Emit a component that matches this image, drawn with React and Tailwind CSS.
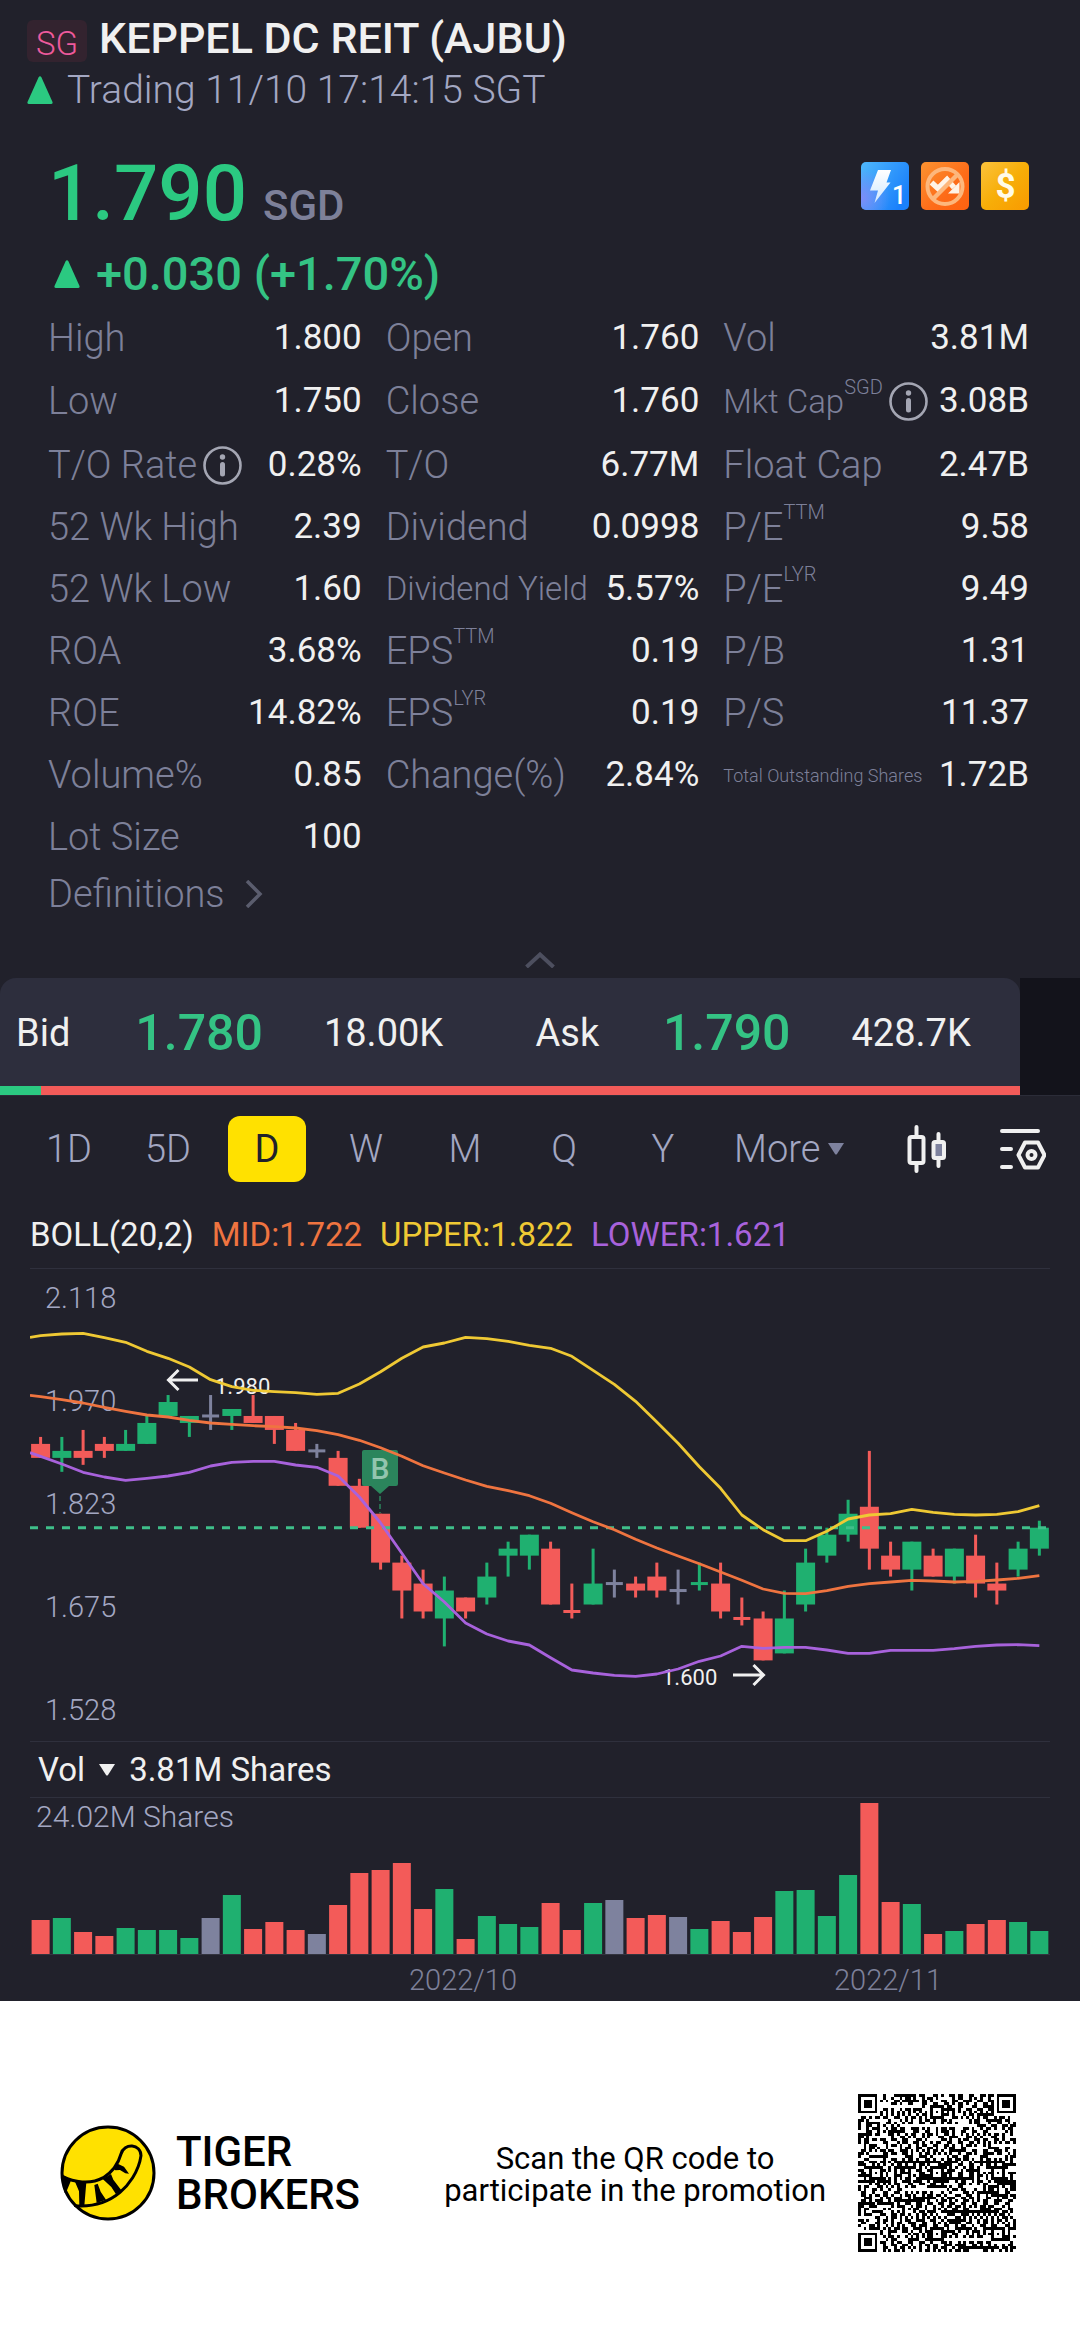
import React from "react";

const STATS = [
  ["High", "1.800"], ["Open", "1.760"], ["Vol", "3.81M"],
  ["Low", "1.750"], ["Close", "1.760"], ["Mkt Cap", "3.08B", { sup: "SGD", info: true, size: "md" }],
  ["T/O Rate", "0.28%", { info: true }], ["T/O", "6.77M"], ["Float Cap", "2.47B"],
  ["52 Wk High", "2.39"], ["Dividend", "0.0998"], ["P/E", "9.58", { sup: "TTM" }],
  ["52 Wk Low", "1.60"], ["Dividend Yield", "5.57%", { size: "md" }], ["P/E", "9.49", { sup: "LYR" }],
  ["ROA", "3.68%"], ["EPS", "0.19", { sup: "TTM" }], ["P/B", "1.31"],
  ["ROE", "14.82%"], ["EPS", "0.19", { sup: "LYR" }], ["P/S", "11.37"],
  ["Volume%", "0.85"], ["Change(%)", "2.84%"], ["Total Outstanding Shares", "1.72B", { size: "sm" }],
  ["Lot Size", "100"],
];

const LABEL_SIZE = { md: "text-[33px]", sm: "text-[18px]", lg: "text-[38px]" };

const COLORS = { r: "#f35b59", g: "#1fb070", n: "#7e829e" };

// kind, body top, body bottom, high, low (cents), volume bar height
const CANDLES = [
  ["r", 191, 189, 192, 189, 34], ["g", 190, 189, 192, 187, 36], ["r", 190, 189, 193, 188, 22], ["r", 191, 190, 192, 189, 18],
  ["g", 191, 190, 193, 190, 26], ["g", 194, 191, 195, 191, 24], ["g", 197, 195, 198, 195, 24], ["g", 195, 194, 195, 192, 16],
  ["n", 195, 195, 198, 193, 36], ["g", 196, 195, 196, 193, 59], ["r", 195, 194, 198, 194, 25], ["r", 195, 193, 195, 191, 32],
  ["r", 193, 190, 194, 190, 24], ["n", 190, 190, 191, 189, 20], ["r", 189, 185, 190, 185, 49], ["r", 185, 179, 186, 179, 81],
  ["r", 181, 174, 181, 173, 84], ["r", 174, 170, 175, 166, 91], ["r", 171, 167, 173, 166, 45], ["g", 170, 166, 172, 162, 65],
  ["r", 169, 167, 169, 166, 15], ["g", 172, 169, 174, 168, 38], ["g", 176, 175, 177, 172, 30], ["g", 178, 175, 178, 173, 27],
  ["r", 176, 168, 177, 168, 51], ["r", 167, 167, 171, 166, 24], ["g", 171, 168, 176, 168, 51], ["n", 171, 171, 173, 169, 54],
  ["r", 171, 170, 172, 169, 36], ["r", 172, 170, 174, 169, 39], ["n", 170, 170, 173, 168, 37], ["g", 171, 171, 174, 170, 25],
  ["r", 171, 167, 174, 166, 33], ["r", 166, 166, 169, 165, 22], ["r", 166, 160, 167, 160, 37], ["g", 166, 161, 170, 161, 63],
  ["g", 174, 168, 176, 167, 64], ["g", 178, 175, 179, 174, 38], ["g", 181, 178, 183, 177, 79], ["r", 182, 176, 190, 173, 151],
  ["r", 175, 173, 177, 172, 52], ["g", 177, 173, 177, 170, 50], ["r", 175, 172, 176, 172, 20], ["g", 176, 172, 176, 171, 23],
  ["r", 175, 171, 178, 169, 30], ["r", 171, 170, 174, 168, 34], ["g", 176, 173, 177, 172, 32], ["g", 179, 176, 180, 175, 23],
];

// Bollinger bands: the first value sits on the left edge, the rest on the candles
const UPPER = [69.3, 67.7, 66, 65.3, 69.7, 74.3, 83.3, 90.3, 99, 111.7, 118.7, 122.3, 123.7, 124.7, 126.3, 125.3, 116, 103.7, 90.3, 79, 75, 69.3, 70.7, 73.3, 77.3, 80.3, 88.3, 102.3, 116.3, 133.3, 154, 175.3, 198.7, 220.3, 247, 261.7, 272.7, 272.7, 263.3, 251, 247, 245.7, 241.3, 244.3, 246.3, 247, 246.3, 243.7, 237.7];
const MID = [127.3, 128.7, 131.7, 135, 139.3, 143.3, 147, 149, 152.3, 155, 156.3, 157.7, 158.7, 160, 162.7, 166.7, 172.3, 179.7, 188.3, 197.7, 205, 212, 218.3, 222.7, 227.7, 235.3, 244.7, 253.7, 261.7, 271.3, 280, 288, 295.7, 304, 312.3, 321, 325.3, 325.7, 322.7, 318.3, 315.7, 314, 312.3, 313, 314, 313.3, 312, 310.3, 307.7];
const LOWER = [184.7, 188.3, 196, 204.3, 209, 212.3, 210.3, 208, 204.3, 198, 194.3, 193.3, 193.3, 197, 199.3, 208, 229, 255, 285.3, 315.7, 334, 355, 366, 373, 377, 389.7, 402, 405, 407.3, 408.3, 406, 401, 393.3, 388, 378.3, 380.3, 379.3, 379.3, 382, 385.3, 385.3, 382.3, 382.3, 382.3, 380.7, 378.3, 377, 376.7, 377.7];

const cx = (i) => 10.6 + 21.25 * i;
const cy = (cents) => 259.7 - (cents - 179) * 6.983;
const band = (ys) => ys.map((y, i) => `${i === 0 ? 0 : cx(i - 1)},${y}`).join(" ");

function Triangle() {
  return (
    <svg viewBox="0 0 26 28" className="h-7 w-[26px] shrink-0" fill="#2bc981" aria-hidden="true">
      <path d="M11.5 1.5Q13 -1 14.500 1.500L25.500 26Q26 28 24 28H2Q0 28 .5 26Z" />
    </svg>
  );
}

function Info() {
  return (
    <svg viewBox="0 0 39 39" className="h-[39px] w-[39px] shrink-0" fill="none" stroke="#a4a6b3" aria-hidden="true">
      <circle cx="19.500" cy="19.500" r="18" strokeWidth="2.600" />
      <path d="M19.500 18.500V28" strokeWidth="5" strokeLinecap="round" />
      <circle cx="19.500" cy="11" r="2.700" fill="#a4a6b3" stroke="none" />
    </svg>
  );
}

function Stat({ label, value, opts = {} }) {
  return (
    <div className="flex items-center justify-between">
      <dt className="flex items-center whitespace-nowrap font-light text-[#7d8099]">
        <span className={LABEL_SIZE[opts.size || "lg"]}>{label}</span>
        {opts.sup && <sup className="-top-[15px] text-[20px] leading-none">{opts.sup}</sup>}
        {opts.info && (
          <span className="ml-1.5">
            <Info />
          </span>
        )}
      </dt>
      <dd className="text-[35px] text-[#f0f0f0]">{value}</dd>
    </div>
  );
}

function Badges() {
  return (
    <div className="mt-1.5 flex gap-3">
      <svg viewBox="0 0 48 48" className="h-12 w-12" aria-label="Level 1 quotes">
        <defs>
          <linearGradient id="blue" x1="0" y1="0" x2="1" y2=".6">
            <stop offset="0" stopColor="#4fb8fb" />
            <stop offset="1" stopColor="#1a80fb" />
          </linearGradient>
          <radialGradient id="violet" cx="0" cy=".75" r=".6">
            <stop offset="0" stopColor="#7d8cf8" />
            <stop offset="1" stopColor="#7d8cf8" stopOpacity="0" />
          </radialGradient>
          <linearGradient id="bolt" x1="0" y1="0" x2="0" y2="1">
            <stop offset="0" stopColor="#fff" />
            <stop offset="1" stopColor="#cfe8ff" />
          </linearGradient>
        </defs>
        <rect width="48" height="48" rx="5" fill="url(#blue)" />
        <rect width="48" height="48" rx="5" fill="url(#violet)" />
        <path d="M17 8H30L25.500 20.500H29.500L13.500 41L17 28.500H9Z" fill="url(#bolt)" />
        <text x="31" y="42" fontSize="25" fontWeight="500" fill="#fff">1</text>
      </svg>
      <svg viewBox="0 0 48 48" className="h-12 w-12" aria-label="Short selling unavailable">
        <defs>
          <linearGradient id="orange" x1="0" y1="0" x2="1" y2="1">
            <stop offset="0" stopColor="#fb9331" />
            <stop offset=".6" stopColor="#fd6b18" />
            <stop offset="1" stopColor="#fe6210" />
          </linearGradient>
        </defs>
        <rect width="48" height="48" rx="5" fill="url(#orange)" />
        <path d="M10.500 20.500L17 26.500L26 17.500L33 25.500" fill="none" stroke="#fff3e6" strokeWidth="5.500" />
        <path d="M38.500 20V31.500H27Z" fill="#fff3e6" />
        <circle cx="24" cy="24.500" r="17.500" fill="none" stroke="#fdb77c" strokeWidth="4" />
        <path d="M12 37L36.500 12.500" stroke="#fdb77c" strokeWidth="4.500" />
      </svg>
      <svg viewBox="0 0 48 48" className="h-12 w-12" aria-label="Dividend">
        <defs>
          <linearGradient id="gold" x1="0" y1="0" x2="1" y2="1">
            <stop offset="0" stopColor="#fbc23c" />
            <stop offset=".5" stopColor="#f7ae08" />
            <stop offset="1" stopColor="#f99a00" />
          </linearGradient>
        </defs>
        <rect width="48" height="48" rx="5" fill="url(#gold)" />
        <text x="24.500" y="36" textAnchor="middle" fontSize="35" fontWeight="700" fill="#fffbe8">$</text>
      </svg>
    </div>
  );
}

function PriceChart() {
  return (
    <svg viewBox="0 1 1020 472" className="block w-full" role="img" aria-label="Daily candles with Bollinger bands">
      {CANDLES.map(([k, top, bottom, high, low], i) => (
        <g key={i} fill={COLORS[k]}>
          <rect x={cx(i) - 1.5} y={cy(high)} width="3" height={cy(low) - cy(high)} />
          {top === bottom ? (
            <rect x={cx(i) - 8.5} y={cy(top) - 1.5} width="17" height="3" />
          ) : (
            <rect x={cx(i) - 9.5} y={cy(top)} width="19" height={cy(bottom) - cy(top)} />
          )}
        </g>
      ))}
      <path d="M334 182H366Q368 182 368 184V216Q368 218 366 218H359L350 226L341 218H334Q332 218 332 216V184Q332 182 334 182Z" fill="#2b855c" />
      <path d="M350 228V245" stroke="#2b855c" strokeWidth="1.500" strokeDasharray="5 3" />
      <text x="350" y="211" textAnchor="middle" fontSize="30" fontWeight="500" fill="#93c5ae">B</text>
      <path d="M0 259.700H1018" stroke="#3fbf8a" strokeWidth="3" strokeDasharray="8 8" />
      <g fontSize="29" fontWeight="300" fill="#a3a7c2">
        {["2.118", "1.970", "1.823", "1.675", "1.528"].map((t, i) => (
          <text key={t} x="15" y={40 + 103 * i}>{t}</text>
        ))}
      </g>
      <g fontSize="22" fill="#f0f0f0">
        <text x="185" y="126">1.980</text>
        <text x="632" y="417">1.600</text>
      </g>
      <g fill="none" stroke="#f0f0f0" strokeWidth="3">
        <path d="M168 112H139M148.500 102L138.500 112L148.500 122" />
        <path d="M703 407H733M723.500 397L733.500 407L723.500 417" />
      </g>
      <g fill="none" strokeWidth="2.800" strokeLinejoin="round">
        <polyline points={band(UPPER)} stroke="#efc934" />
        <polyline points={band(MID)} stroke="#ef7440" />
        <polyline points={band(LOWER)} stroke="#a862dc" />
      </g>
    </svg>
  );
}

function VolumeChart() {
  return (
    <svg viewBox="0 0 1020 203" className="block w-full" role="img" aria-label="Daily volume">
      {CANDLES.map(([k, , , , , h], i) => (
        <rect key={i} x={cx(i) - 9} y={156 - h} width="18" height={h} fill={COLORS[k]} />
      ))}
      <path d="M0 156.500H1020" stroke="#33343f" />
      <text x="6" y="29" fontSize="30" fontWeight="300" fill="#a3a7c2">24.02M Shares</text>
      <g fontSize="29" fontWeight="300" fill="#7d8099" textAnchor="middle">
        <text x="433" y="192">2022/10</text>
        <text x="858" y="192">2022/11</text>
      </g>
    </svg>
  );
}

function TigerLogo() {
  return (
    <svg viewBox="60 76 288 288" className="h-24 w-24 shrink-0" aria-hidden="true">
      <circle cx="204" cy="220" r="138" fill="#ffe100" stroke="#000" strokeWidth="9" />
      <path d="M69 231C100 247 150 256 190 234C222 214 236 188 243 163C252 129 303 132 303 168C296 218 264 258 240 278C204 308 160 322 106 318" fill="none" stroke="#000" strokeWidth="9" strokeLinecap="round" />
      <path d="M66 226L94 240L80 274L74 280Q66 254 66 226ZM105 246L139 248L133 318L118 318L117 275ZM163 256L173 252L182 276L198 300L170 310ZM188 238L213 223L220 240L244 272L228 284L214 262ZM220 204L233 192L252 201L267 222L256 221L240 211L226 212Z" fill="#000" />
    </svg>
  );
}

const QR_SIZE = 57;

function qrPath() {
  const inFinder = (r, c) => [[0, 0], [0, QR_SIZE - 7], [QR_SIZE - 7, 0]].find(([y, x]) => r >= y - 1 && r <= y + 7 && c >= x - 1 && c <= x + 7);
  const aligns = [[6, 28], [28, 6], [28, 28], [28, 50], [50, 28], [50, 50]];
  let seed = 20221110;
  let d = "";
  for (let r = 0; r < QR_SIZE; r++) {
    for (let c = 0; c < QR_SIZE; c++) {
      seed = (seed * 1103515245 + 12345) % 2147483648;
      let on = (seed >> 12) % 2 === 1;
      const f = inFinder(r, c);
      const a = aligns.find(([y, x]) => Math.abs(r - y) < 3 && Math.abs(c - x) < 3);
      if (f) {
        const ring = Math.max(Math.abs(r - f[0] - 3), Math.abs(c - f[1] - 3));
        on = ring === 3 || ring < 2;
      } else if (a) {
        on = Math.max(Math.abs(r - a[0]), Math.abs(c - a[1])) !== 1;
      } else if (r === 6 || c === 6) {
        on = (r + c) % 2 === 0;
      }
      if (on) d += `M${c} ${r}h1v1h-1z`;
    }
  }
  return d;
}

const QR = qrPath();

export default function App() {
  const periods = ["1D", "5D", "D", "W", "M", "Q", "Y"];
  return (
    <div className="min-h-screen bg-white font-[Roboto,sans-serif]">
      <main className="bg-[#21212b]">
        <header className="px-[27px] pt-5">
          <div className="flex items-start gap-3">
            <span className="flex h-[42px] w-[60px] items-center justify-center rounded-md bg-[#33232f] pt-1 text-[33px] font-light leading-none text-[#ee5a9c]">SG</span>
            <h1 className="text-[43px] font-medium leading-9 text-[#f0f0f0]">KEPPEL DC REIT (AJBU)</h1>
          </div>
          <div className="mt-2 flex h-10 items-center gap-3.5">
            <Triangle />
            <p className="text-[39px] font-light leading-10 text-[#a3a7c2]">Trading 11/10 17:14:15 SGT</p>
          </div>
        </header>

        <section className="pl-12 pr-[51px]">
          <div className="mt-[46px] flex items-start justify-between">
            <p className="flex h-[76px] items-baseline gap-4">
              <span className="text-[78px] font-medium leading-[76px] text-[#2bc981]">1.790</span>
              <span className="text-[42px] font-medium leading-none text-[#7d8099]">SGD</span>
            </p>
            <Badges />
          </div>
          <div className="mt-[18px] flex h-12 items-center gap-4 pl-1.5">
            <Triangle />
            <p className="text-[47px] font-medium leading-[48px] text-[#34c384]">+0.030 (+1.70%)</p>
          </div>
          <dl className="mt-[9px] grid auto-rows-[62px] grid-cols-[314fr_314fr_306fr] grid-rows-[62px_65px] gap-x-6">
            {STATS.map(([label, value, opts], i) => (
              <Stat key={i} label={label} value={value} opts={opts} />
            ))}
          </dl>
          <a href="#definitions" className="flex h-[52px] items-center gap-5 text-[38px] font-light text-[#7d8099]">
            Definitions
            <svg viewBox="0 0 18 28" className="h-7 w-[18px]" fill="none" stroke="#5b5d6e" strokeWidth="3.500" aria-hidden="true">
              <path d="M2 1L15 14L2 27" />
            </svg>
          </a>
        </section>

        <button type="button" aria-label="Collapse" className="flex w-full justify-center pb-2.5 pt-8">
          <svg viewBox="0 0 30 16" className="h-4 w-[30px]" fill="none" stroke="#4d4f5f" strokeWidth="4" aria-hidden="true">
            <path d="M1.500 15L15 2.500L28.500 15" />
          </svg>
        </button>

        <section className="flex border-b border-[#2b2c38]">
          <div className="flex-1 overflow-hidden rounded-t-2xl bg-[#2d2e3d]">
            <div className="grid h-[108px] grid-cols-[119fr_188fr_211fr_127fr_188fr_168fr] items-center pl-4 pt-0.5 text-[38px] text-[#f0f0f0]">
              <span>Bid</span>
              <span className="text-[50px] font-medium text-[#34c384]">1.780</span>
              <span>18.00K</span>
              <span>Ask</span>
              <span className="text-[50px] font-medium text-[#34c384]">1.790</span>
              <span>428.7K</span>
            </div>
            <div className="flex h-[9px] bg-[#f35b59]">
              <div className="w-[4%] bg-[#2bc981]" />
            </div>
          </div>
          <div className="w-[60px] bg-[#13131b]" />
        </section>

        <nav className="flex items-center pl-[30px] pr-[34px] pt-5 text-[38px] font-light text-[#a3a7c2]">
          <div className="flex gap-[21px]">
            {periods.map((p) => (
              <button
                key={p}
                type="button"
                aria-pressed={p === "D"}
                className={p === "D" ? "h-[66px] w-[78px] rounded-xl bg-[#ffe100] font-normal text-[#21212b]" : "h-[66px] w-[78px]"}
              >
                {p}
              </button>
            ))}
          </div>
          <button type="button" className="ml-8 flex items-center gap-2">
            More
            <svg viewBox="0 0 16 12" className="h-3 w-4" fill="#7e829e" aria-hidden="true"><path d="M0 0H16L9 11Q8 12 7 11Z" /></svg>
          </button>
          <div className="ml-auto flex items-center gap-[53px]">
            <button type="button" aria-label="Chart type">
              <svg viewBox="0 0 40 48" className="h-12 w-10" fill="none" stroke="#f0f0f0" strokeWidth="4" strokeLinecap="round" aria-hidden="true">
                <path d="M9.500 2V10M9.500 40V46M31.500 9V15M31.500 35V41" />
                <rect x="2.500" y="12" width="14" height="26" rx="2" />
                <rect x="26.500" y="17" width="10.500" height="16" rx="1.500" fill="#7e829e" />
              </svg>
            </button>
            <button type="button" aria-label="Chart settings">
              <svg viewBox="0 0 46 42" className="h-[42px] w-[46px]" fill="none" stroke="#f0f0f0" strokeWidth="4" strokeLinecap="round" strokeLinejoin="round" aria-hidden="true">
                <path d="M2 3H38M2 21H11M2 39H11" />
                <path d="M25 14.500H38L44.500 27L38 39.500H25L18.500 27Z" />
                <circle cx="31.500" cy="27" r="4" />
              </svg>
            </button>
          </div>
        </nav>

        <section className="px-[30px]">
          <p className="mt-[33px] flex gap-[18px] text-[33px] leading-10 text-[#f0f0f0]">
            <span>BOLL(20,2)</span>
            <span className="text-[#ef7440]">MID:1.722</span>
            <span className="text-[#efc934]">UPPER:1.822</span>
            <span className="text-[#a862dc]">LOWER:1.621</span>
          </p>
          <div className="mt-[13px] border-t border-[#2f303d]">
            <PriceChart />
          </div>
          <div className="flex h-[57px] items-center border-y border-[#2f303d] pl-2 text-[33px] text-[#f0f0f0]">
            <button type="button" className="flex items-center gap-3.5">
              Vol
              <svg viewBox="0 0 16 12" className="h-3 w-4" fill="#f0f0f0" aria-hidden="true"><path d="M0 0H16L9 11Q8 12 7 11Z" /></svg>
            </button>
            <span className="ml-3.5">3.81M Shares</span>
          </div>
          <VolumeChart />
        </section>
      </main>

      <footer className="flex items-center justify-between bg-white py-[93px] pl-[60px] pr-16 text-black">
        <div className="flex items-center gap-5">
          <TigerLogo />
          <p className="text-[42px] font-medium leading-[43px]">
            TIGER
            <br />
            BROKERS
          </p>
        </div>
        <div className="flex items-center gap-8">
          <p className="pt-1 text-center text-[31px] leading-8">
            Scan the QR code to
            <br />
            participate in the promotion
          </p>
          <svg viewBox="0 0 57 57" className="h-[158px] w-[158px]" shapeRendering="crispEdges" role="img" aria-label="QR code">
            <path d={QR} fill="#000" />
          </svg>
        </div>
      </footer>
    </div>
  );
}
